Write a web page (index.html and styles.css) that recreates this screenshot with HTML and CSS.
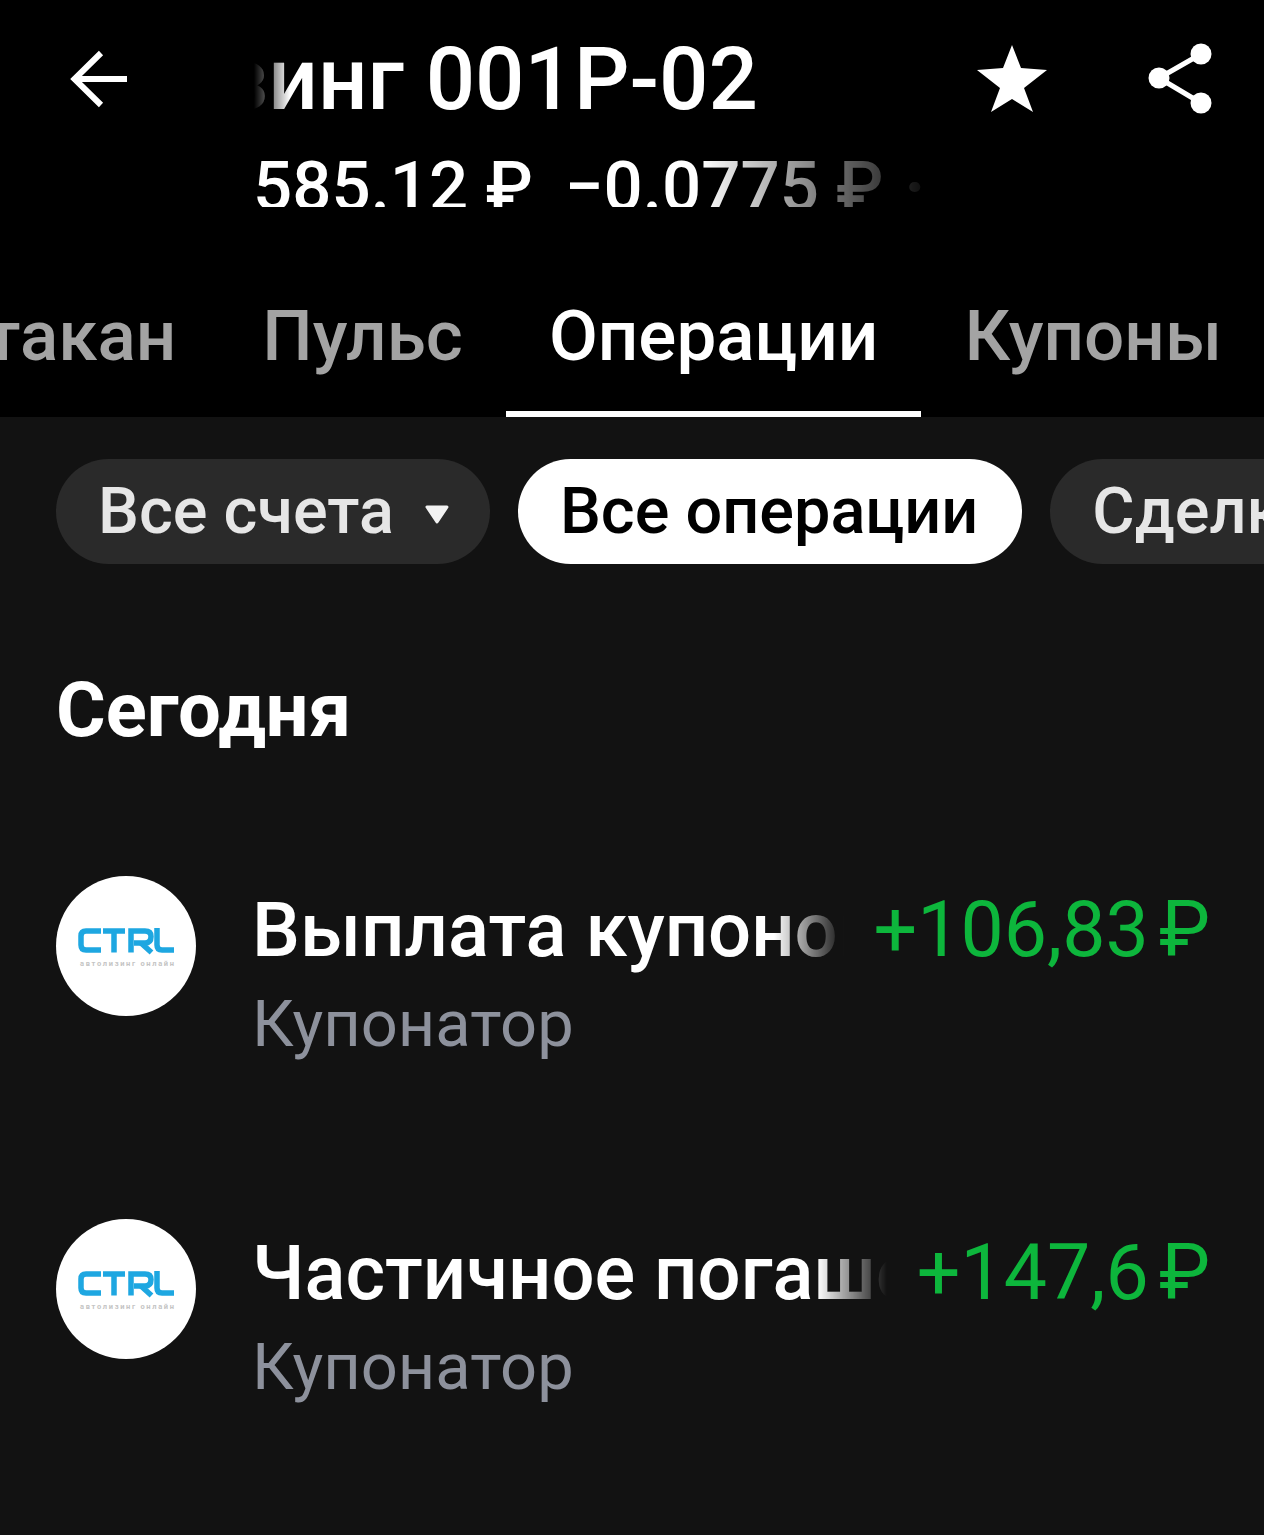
FILE: index.html
```html
<!DOCTYPE html>
<html lang="ru">
<head>
<meta charset="utf-8">
<title>Операции</title>
<link rel="stylesheet" href="styles.css">
</head>
<body>
<div class="page">
  <header class="head">
    <div class="topbar">
      <button class="icon-btn back" aria-label="Назад">
        <svg width="60" height="60" viewBox="0 0 60 60"><path d="M57 29H6M31 3 4.500 29 31 55" fill="none" stroke="#fff" stroke-width="6"/></svg>
      </button>
      <div class="heading">
        <div class="title-clip"><div class="title">Контрол лизинг 001Р-02</div></div>
        <div class="sub-clip"><div class="sub"><span>585.12 ₽</span><span>−0.0775 ₽</span><span class="dot">·</span></div></div>
      </div>
      <button class="icon-btn star" aria-label="Избранное">
        <svg width="72" height="72" viewBox="0 0 72 72"><path d="M36 2 45 25 71 27 48 45 57 69 36 56 15 69 24 45 1 27 27 25Z" fill="#fff"/></svg>
      </button>
      <button class="icon-btn share" aria-label="Поделиться">
        <svg width="66" height="72" viewBox="0 0 66 72"><path d="M53 11 11 35 53 60" fill="none" stroke="#fff" stroke-width="5"/><circle cx="53" cy="11" r="10.500" fill="#fff"/><circle cx="11" cy="35" r="10.500" fill="#fff"/><circle cx="53" cy="60" r="10.500" fill="#fff"/></svg>
      </button>
    </div>
    <nav class="tabs">
      <a class="tab">Стакан</a>
      <a class="tab">Пульс</a>
      <a class="tab active">Операции</a>
      <a class="tab">Купоны</a>
    </nav>
  </header>
  <main class="body">
    <div class="chips">
      <div class="chip drop">Все счета<svg class="caret" width="26" height="20" viewBox="0 0 26 20"><path d="M3 2H23L13 17Z" fill="#f2f2f2" stroke="#f2f2f2" stroke-width="3" stroke-linejoin="round"/></svg></div>
      <div class="chip on">Все операции</div>
      <div class="chip">Сделки</div>
    </div>
    <h2 class="day">Сегодня</h2>
    <div class="ops">
      <article class="op">
        <svg class="avatar" width="140" height="140" viewBox="0 0 140 140"><circle cx="70" cy="70" r="70" fill="#fff"/><g fill="none" stroke="#1ea7e1" stroke-width="5.500"><path d="M45 55H30Q25 55 25 60V69Q25 74 30 74H45"/><path d="M47 55H69M58 55V76.500"/><path d="M75 76.500V55H89Q95 55 95 60.500Q95 67 89 67H78"/><path d="M85 67 95.500 76.500"/><path d="M101 52V69Q101 74 106 74H118"/></g><text class="logo-sub" x="24" y="90" textLength="94">автолизинг онлайн</text></svg>
        <div class="op-main">
          <div class="op-title">Выплата купонов</div>
          <div class="op-sub">Купонатор</div>
        </div>
        <div class="op-sum">+106,83 ₽</div>
      </article>
      <article class="op">
        <svg class="avatar" width="140" height="140" viewBox="0 0 140 140"><circle cx="70" cy="70" r="70" fill="#fff"/><g fill="none" stroke="#1ea7e1" stroke-width="5.500"><path d="M45 55H30Q25 55 25 60V69Q25 74 30 74H45"/><path d="M47 55H69M58 55V76.500"/><path d="M75 76.500V55H89Q95 55 95 60.500Q95 67 89 67H78"/><path d="M85 67 95.500 76.500"/><path d="M101 52V69Q101 74 106 74H118"/></g><text class="logo-sub" x="24" y="90" textLength="94">автолизинг онлайн</text></svg>
        <div class="op-main">
          <div class="op-title">Частичное погашение</div>
          <div class="op-sub">Купонатор</div>
        </div>
        <div class="op-sum">+147,6 ₽</div>
      </article>
    </div>
  </main>
</div>
</body>
</html>
```
FILE: styles.css
```css
* { box-sizing: border-box; }
html, body { margin: 0; padding: 0; }
body { background: #121212; color: #fff; font-family: Roboto, "Noto Sans", sans-serif; }
.page { width: 1264px; height: 1535px; overflow: hidden; }

.head { background: #000; height: 417px; display: flex; flex-direction: column; }
.topbar { height: 270px; display: flex; align-items: flex-start; padding: 0 50px 0 70px; }
.icon-btn { background: none; border: 0; padding: 0; display: block; line-height: 0; }
.back { margin-top: 50px; width: 184px; text-align: left; }
.star { margin-top: 43px; margin-left: auto; }
.share { margin-top: 43px; margin-left: 100px; }

.heading { width: 670px; }
.title-clip { width: 504px; height: 120px; overflow: hidden; display: flex; justify-content: flex-end; align-items: center; padding-top: 38px; -webkit-mask-image: linear-gradient(90deg, transparent 0, #fff 36px); mask-image: linear-gradient(90deg, transparent 0, #fff 36px); }
.title { font-size: 87px; font-weight: 500; line-height: 100px; white-space: nowrap; flex: none; }
.sub-clip { height: 87px; overflow: hidden; -webkit-mask-image: linear-gradient(90deg, #fff 446px, rgba(255,255,255,.05) 670px); mask-image: linear-gradient(90deg, #fff 446px, rgba(255,255,255,.05) 670px); }
.sub { display: flex; gap: 32px; margin-left: -1px; font-size: 69px; font-weight: 500; line-height: 80px; padding-top: 27px; white-space: nowrap; }
.dot { margin-left: -11px; font-weight: 700; }

.tabs { height: 147px; margin-right: -1px; display: flex; justify-content: flex-end; overflow: hidden; }
.tab { flex: none; padding: 0 43px; height: 147px; line-height: 132px; font-size: 71px; font-weight: 500; color: #a3a3a3; border-bottom: 6px solid transparent; }
.tab.active { color: #fff; border-bottom-color: #fff; }

.body { padding-top: 42px; }
.chips { display: flex; gap: 28px; padding-left: 56px; overflow: hidden; }
.chip { flex: none; display: flex; align-items: center; height: 105px; padding: 0 44px 2px 42px; border-radius: 53px; background: #2a2a2a; color: #e6e6e6; font-size: 64.800px; font-weight: 500; white-space: nowrap; }
.chip.drop { padding-right: 40px; }
.chip.on { background: #fff; color: #000; }
.caret { margin-left: 30px; margin-top: 8px; }

.day { margin: 101px 0 0 56px; font-size: 76px; font-weight: 700; line-height: 90px; }

.ops { padding-top: 121px; display: flex; flex-direction: column; gap: 203px; }
.op { height: 140px; display: flex; padding: 0 54px 0 56px; align-items: flex-start; }
.avatar { flex: none; }
.op-main { flex: 1; min-width: 0; margin-left: 56px; }
.op-title { font-size: 76px; font-weight: 500; line-height: 95px; white-space: nowrap; overflow: hidden; margin-top: 7px; -webkit-mask-image: linear-gradient(90deg, #fff calc(100% - 70px), rgba(255,255,255,0) 100%); mask-image: linear-gradient(90deg, #fff calc(100% - 70px), rgba(255,255,255,0) 100%); }
.op-sub { font-size: 65px; line-height: 92px; color: #8d919c; white-space: nowrap; }
.op-sum { flex: none; margin-left: 30px; font-size: 77px; font-kerning: none; word-spacing: -9px; line-height: 96px; margin-top: 6px; color: #0db63c; white-space: nowrap; }
.logo-sub { font-family: Roboto, sans-serif; font-size: 7.5px; font-weight: 700; fill: #c4c4c4; }
```
